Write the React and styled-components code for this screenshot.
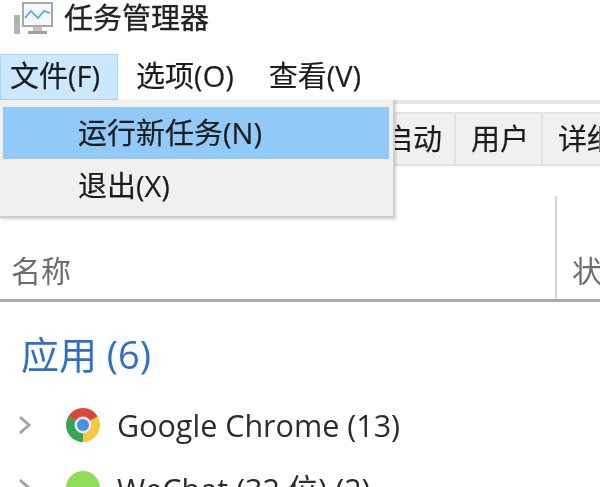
import { createGlobalStyle, styled } from "styled-components";

const GlobalStyle = createGlobalStyle`
  html, body {
    margin: 0;
    padding: 0;
    background: #fff;
    overflow: hidden;
  }
  body {
    font-family: "Open Sans", "Noto Sans CJK SC", sans-serif;
    color: #222;
  }
`;

const Page = styled.div`
  position: relative;
  width: 600px;
  height: 487px;
  overflow: hidden;
  filter: blur(0.5px);
`;
const TitleBar = styled.div`
  display: flex;
  align-items: center;
  gap: 11px;
  box-sizing: border-box;
  height: 34px;
  padding: 2px 0 0 14px;
  font-size: 29px;
  line-height: 32px;
  color: #222;
  -webkit-text-stroke: 0.3px #222;
`;
const TitleIcon = styled.svg`
  flex: none;
  width: 39px;
  height: 33px;
  margin-top: 1px;
`;
const MenuBar = styled.div`
  display: flex;
  height: 46px;
  margin-top: 20px;
  border-bottom: 4px solid #e6e6e6;
`;
const MenuItem = styled.div`
  display: flex;
  align-items: center;
  padding: ${(p) => (p.$open ? "0 18px 2px 10px" : "0 17px 2px 18px")};
  font-size: 29px;
  line-height: 38px;
  color: #1c1c1c;
  background: ${(p) => (p.$open ? "#cce8ff" : "transparent")};
  box-shadow: ${(p) => (p.$open ? "inset 0 0 0 1px #a9d6f8" : "none")};
  white-space: nowrap;
  -webkit-text-stroke: 0.2px #1c1c1c;
`;
const Dropdown = styled.div`
  position: absolute;
  top: 100px;
  left: 0;
  z-index: 10;
  box-sizing: border-box;
  width: 395px;
  height: 118px;
  padding: 7px 4px 0 3px;
  background: #f0f0f0;
  border-right: 2px solid #cfcfcf;
  border-bottom: 2px solid #cfcfcf;
  box-shadow: 1px 1px 3px rgba(0, 0, 0, 0.18);
`;
const DropdownItem = styled.div`
  display: flex;
  align-items: center;
  box-sizing: border-box;
  height: 52px;
  padding: ${(p) => (p.$active ? 0 : 2)}px 0 0 75px;
  font-size: 29px;
  line-height: 40px;
  color: #1c1c1c;
  background: ${(p) => (p.$active ? "#91c9f7" : "transparent")};
  -webkit-text-stroke: 0.2px #1c1c1c;
`;
const Tabs = styled.div`
  display: flex;
  height: 54px;
  margin-top: 8px;
  background: #f0f0f0;
  border-top: 2px solid #e4e4e4;
  border-bottom: 2px solid #e0e0e0;
  box-sizing: border-box;
  width: 700px;
`;
const Tab = styled.div`
  flex: none;
  box-sizing: border-box;
  width: ${(p) => p.$width}px;
  display: flex;
  align-items: center;
  padding-left: 15px;
  font-size: 29px;
  line-height: 40px;
  color: #1c1c1c;
  border-right: 2px solid #e0e0e0;
  white-space: nowrap;
  -webkit-text-stroke: 0.2px #1c1c1c;
`;
const ColumnHeader = styled.div`
  display: grid;
  grid-template-columns: 555px 1fr;
  height: 106px;
  margin-top: 30px;
  border-bottom: 3px solid #a8a8a8;
  box-sizing: border-box;
`;
const ColumnCell = styled.div`
  display: flex;
  align-items: flex-end;
  padding: 0 0 8px ${(p) => p.$pad}px;
  font-size: 30px;
  color: #6d6d6d;
  border-left: ${(p) => (p.$divided ? "2px solid #d6d6d6" : "none")};
  white-space: nowrap;
`;
const GroupTitle = styled.div`
  padding: 26px 0 0 21px;
  height: 56px;
  font-size: 38px;
  line-height: 52px;
  color: #2f6fc4;
`;
const ProcessList = styled.div`
  display: flex;
  flex-direction: column;
  gap: 21px;
  margin-top: 20px;
`;
const ProcessRow = styled.div`
  display: flex;
  align-items: center;
  height: 42px;
  padding-left: 17px;
`;
const Chevron = styled.svg`
  flex: none;
  width: 16px;
  height: 24px;
  margin-right: 33px;
`;
const AppIcon = styled.svg`
  flex: none;
  width: 34px;
  height: 34px;
  margin-right: 17px;
`;
const ProcessName = styled.div`
  font-size: 30.5px;
  color: #2c2c2c;
  white-space: nowrap;
`;

function MonitorIcon() {
  return (
    <TitleIcon viewBox="0 0 39 33">
      <rect x="0" y="13" width="6" height="19" fill="#b4b4b4" />
      <rect x="1.5" y="15" width="3" height="4" fill="#8cc487" />
      <rect x="9" y="1" width="29" height="23" fill="#f2f8fb" stroke="#a8a8a8" strokeWidth="2" />
      <path d="M11 16 L17 9 L24 16 L30 9 L36 11" fill="none" stroke="#55a8de" strokeWidth="1.6" />
      <rect x="19" y="25" width="9" height="4" fill="#c2c2c2" />
      <rect x="14" y="29" width="19" height="3" fill="#a0a0a0" />
    </TitleIcon>
  );
}

function ChevronIcon() {
  return (
    <Chevron viewBox="0 0 16 24">
      <path d="M3 4 L12 12 L3 20" fill="none" stroke="#a3a3a3" strokeWidth="3" />
    </Chevron>
  );
}

function ChromeIcon() {
  return (
    <AppIcon viewBox="0 0 34 34">
      <path d="M17 17 L31.7 8.5 A17 17 0 0 0 2.3 8.5 Z" fill="#d9463a" />
      <path d="M17 17 L2.3 8.5 A17 17 0 0 0 17 34 Z" fill="#3aa354" />
      <path d="M17 17 L17 34 A17 17 0 0 0 31.7 8.5 Z" fill="#f7c93e" />
      <circle cx="17" cy="17" r="8.5" fill="#e9e9e9" />
      <circle cx="17" cy="17" r="6" fill="#4d8fe8" />
    </AppIcon>
  );
}

function WeChatIcon() {
  return (
    <AppIcon viewBox="0 0 34 34">
      <circle cx="17" cy="17" r="17" fill="#8fdc5a" />
    </AppIcon>
  );
}

export default function App() {
  return (
    <Page>
      <GlobalStyle />
      <TitleBar>
        <MonitorIcon />
        任务管理器
      </TitleBar>
      <MenuBar>
        <MenuItem $open>文件(F)</MenuItem>
        <MenuItem>选项(O)</MenuItem>
        <MenuItem>查看(V)</MenuItem>
      </MenuBar>
      <Dropdown>
        <DropdownItem $active>运行新任务(N)</DropdownItem>
        <DropdownItem>退出(X)</DropdownItem>
      </Dropdown>
      <Tabs>
        <Tab $width={82}>进程</Tab>
        <Tab $width={87}>性能</Tab>
        <Tab $width={200}>应用历史记录</Tab>
        <Tab $width={87}>启动</Tab>
        <Tab $width={87}>用户</Tab>
        <Tab $width={157}>详细信息</Tab>
      </Tabs>
      <ColumnHeader>
        <ColumnCell $pad={11}>名称</ColumnCell>
        <ColumnCell $pad={15} $divided>状态</ColumnCell>
      </ColumnHeader>
      <GroupTitle>应用 (6)</GroupTitle>
      <ProcessList>
        <ProcessRow>
          <ChevronIcon />
          <ChromeIcon />
          <ProcessName>Google Chrome (13)</ProcessName>
        </ProcessRow>
        <ProcessRow>
          <ChevronIcon />
          <WeChatIcon />
          <ProcessName>WeChat (32 位) (2)</ProcessName>
        </ProcessRow>
      </ProcessList>
    </Page>
  );
}
